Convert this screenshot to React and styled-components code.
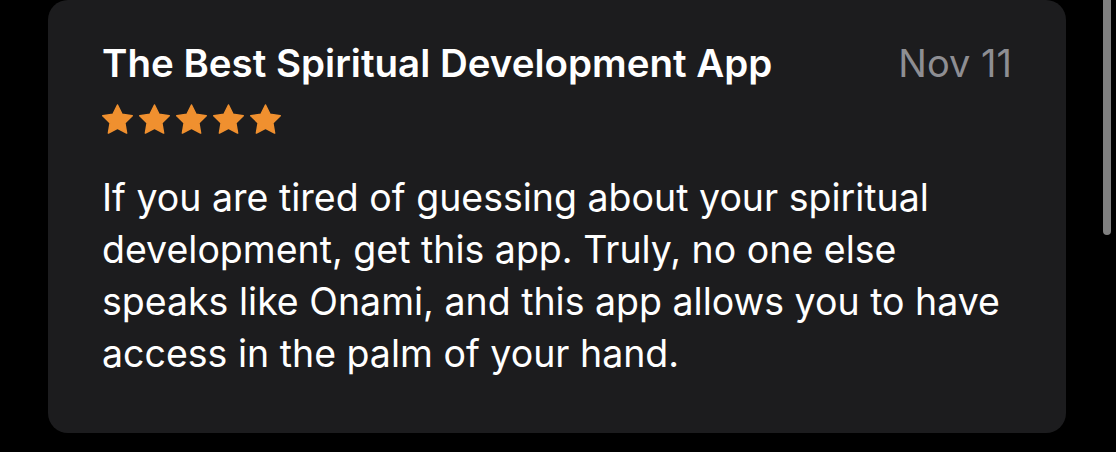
import React from 'react';
import styled, { createGlobalStyle } from 'styled-components';

const GlobalStyle = createGlobalStyle`
  html, body {
    margin: 0;
    padding: 0;
    background: #000;
    height: 100%;
    overflow: hidden;
  }
  body {
    font-family: Inter, "Liberation Sans", sans-serif;
    -webkit-font-smoothing: antialiased;
  }
`;

const Page = styled.div`
  position: relative;
  width: 1116px;
  height: 452px;
  background: #000;
`;

const Card = styled.article`
  margin-left: 48px;
  width: 1018px;
  height: 433px;
  box-sizing: border-box;
  padding: 41px 54px 0 54px;
  background: #1c1c1e;
  border-radius: 20px;
  display: flex;
  flex-direction: column;
`;

const Header = styled.div`
  display: flex;
  justify-content: space-between;
  align-items: baseline;
`;

const Title = styled.h2`
  margin: 0;
  font-size: 38.5px;
  line-height: 44px;
  font-weight: 600;
  color: #fff;
`;

const DateLabel = styled.span`
  font-size: 38px;
  line-height: 44px;
  color: #8e8e93;
  font-weight: 400;
`;

const Stars = styled.div`
  display: flex;
  gap: 6px;
  margin-top: 19px;
`;

const Body = styled.p`
  margin: 38px 0 0 0;
  font-size: 37.5px;
  line-height: 52px;
  color: #fff;
  font-weight: 400;
  max-width: 905px;
`;

const Scrollbar = styled.div`
  position: absolute;
  top: 0;
  right: 5px;
  width: 8px;
  height: 235px;
  background: #808080;
  border-radius: 0 0 4px 4px;
`;

const Star = () => (
  <svg width="31" height="30" viewBox="1.5 1.5 21 20">
    <path
      d="M12 2l3.09 6.26L22 9.27l-5 4.87 1.18 6.88L12 17.77l-6.18 3.25L7 14.14 2 9.27l6.91-1.01z"
      fill="#f0902f"
      stroke="#f0902f"
      strokeWidth="1"
      strokeLinejoin="round"
    />
  </svg>
);

const App = () => {
  return (
    <Page>
      <GlobalStyle />
      <Card>
        <Header>
          <Title>The Best Spiritual Development App</Title>
          <DateLabel>Nov 11</DateLabel>
        </Header>
        <Stars>
          {[0, 1, 2, 3, 4].map((i) => (
            <Star key={i} />
          ))}
        </Stars>
        <Body>
          If you are tired of guessing about your spiritual development, get this app. Truly, no one else
          speaks like Onami, and this app allows you to have access in the palm of your hand.
        </Body>
      </Card>
      <Scrollbar />
    </Page>
  );
};

export default App;
